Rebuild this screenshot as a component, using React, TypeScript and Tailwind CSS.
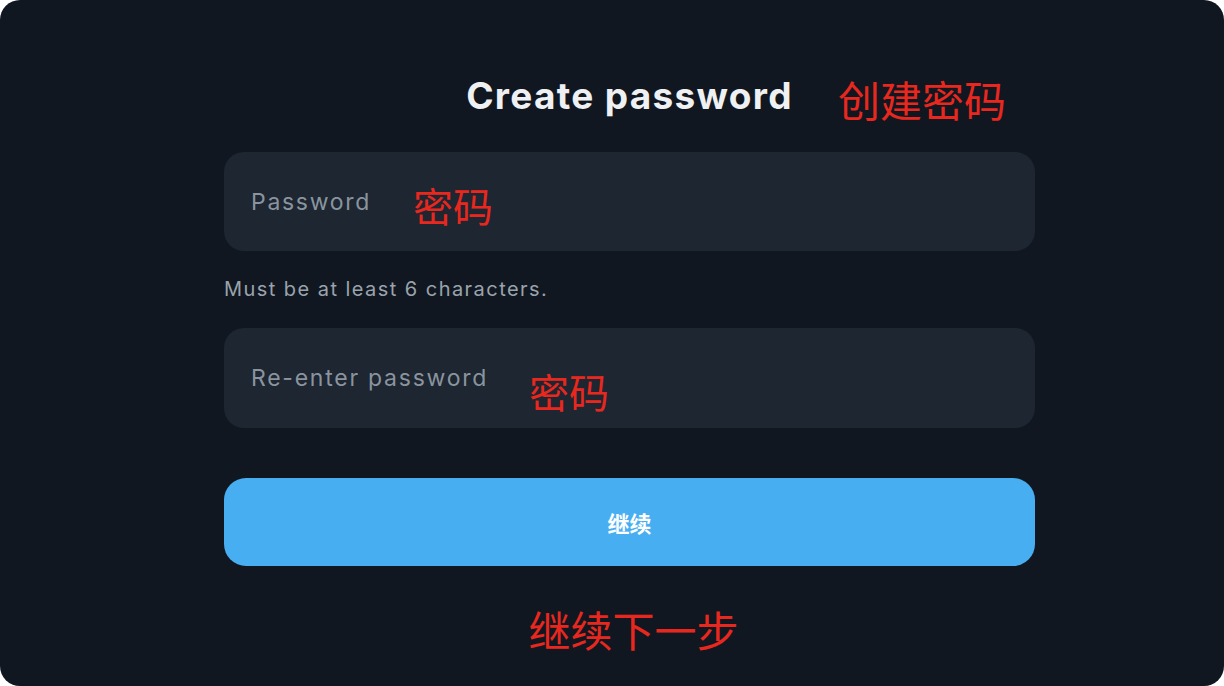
import React from 'react';

const latin = "font-['Inter','Liberation_Sans','Noto_Sans_CJK_SC',sans-serif]";
const cjk = "font-['Noto_Sans_CJK_SC','Liberation_Sans',sans-serif]";

export default function App() {
  return (
    <div className="w-[1224px] h-[686px] bg-white">
      <div className="h-full rounded-[20px] bg-[#111720] flex pl-[224px]">
        <div className={`w-[811px] flex flex-col pt-[72px] ${latin}`}>
          {/* Title */}
          <div className="relative h-[46px] flex items-center justify-center">
            <h1 className="text-[37px] font-bold text-[#eef0f2] tracking-[1.3px] leading-none">Create password</h1>
            <span className={`absolute left-[614px] top-[6px] text-[42px] leading-none text-[#e8281e] ${cjk}`}>创建密码</span>
          </div>

          {/* Password */}
          <div className="relative mt-[34px] h-[99px] rounded-[20px] bg-[#1d2631] flex items-center px-[27px] pt-[2px]">
            <span className="text-[23px] text-[#8a949f] tracking-[1.7px]">Password</span>
            <span className={`absolute left-[189px] top-[33px] text-[40px] leading-none text-[#e8281e] ${cjk}`}>密码</span>
          </div>
          <p className="mt-[28px] text-[20px] leading-none text-[#9aa3ad] tracking-[1.45px]">Must be at least 6 characters.</p>

          {/* Re-enter */}
          <div className="relative mt-[29px] h-[100px] rounded-[20px] bg-[#1d2631] flex items-center px-[27px]">
            <span className="text-[23px] text-[#8a949f] tracking-[1.75px]">Re-enter password</span>
            <span className={`absolute left-[305px] top-[43px] text-[40px] leading-none text-[#e8281e] ${cjk}`}>密码</span>
          </div>

          {/* Continue */}
          <button className="mt-[50px] h-[88px] rounded-[22px] bg-[#47aef2] flex items-center justify-center">
            <span className={`text-[22px] font-bold text-white ${cjk}`}>继续</span>
          </button>

          <div className="mt-[42px] flex justify-center pl-[8px]">
            <span className={`text-[42px] leading-none text-[#e8281e] ${cjk}`}>继续下一步</span>
          </div>
        </div>
      </div>
    </div>
  );
}
